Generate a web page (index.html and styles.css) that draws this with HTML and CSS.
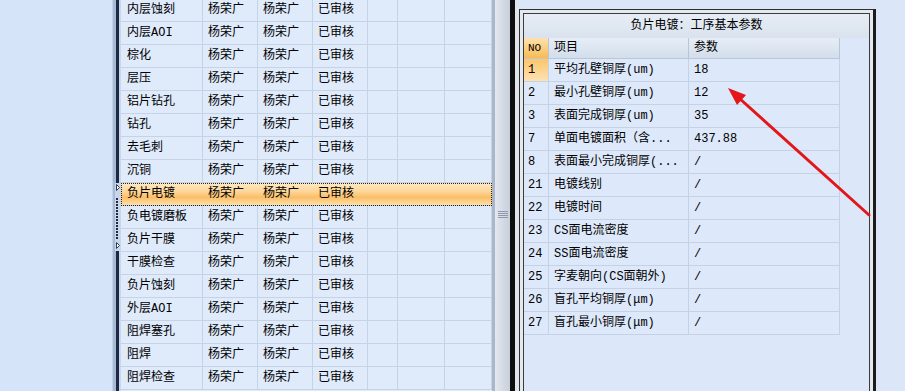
FILE: index.html
```html
<!DOCTYPE html>
<html lang="zh-CN">
<head>
<meta charset="utf-8">
<title>工序基本参数</title>
<link rel="stylesheet" href="styles.css">
</head>
<body>
<div class="app">
  <div class="nav"></div>
  <div class="lsplit">
    <svg class="lgrip" width="6" height="68" viewBox="0 0 6 68">
      <defs>
        <pattern id="dots" width="2" height="3" patternUnits="userSpaceOnUse">
          <rect width="2" height="2" fill="#1f2b44"/>
        </pattern>
      </defs>
      <path d="M1.5 1.5 L4.5 4.5 L1.5 7.5 Z" fill="#ffffff" stroke="#2b3a55" stroke-width="1"/>
      <rect x="1" y="15" width="2" height="42" fill="url(#dots)"/>
      <path d="M1.5 59.5 L4.5 62.5 L1.5 65.5 Z" fill="#ffffff" stroke="#2b3a55" stroke-width="1"/>
    </svg>
  </div>
  <div class="list">
    <div class="rows">
      <div class="row"><span>内层蚀刻</span><span>杨荣广</span><span>杨荣广</span><span>已审核</span><span></span><span></span><span></span></div>
      <div class="row"><span>内层AOI</span><span>杨荣广</span><span>杨荣广</span><span>已审核</span><span></span><span></span><span></span></div>
      <div class="row"><span>棕化</span><span>杨荣广</span><span>杨荣广</span><span>已审核</span><span></span><span></span><span></span></div>
      <div class="row"><span>层压</span><span>杨荣广</span><span>杨荣广</span><span>已审核</span><span></span><span></span><span></span></div>
      <div class="row"><span>铝片钻孔</span><span>杨荣广</span><span>杨荣广</span><span>已审核</span><span></span><span></span><span></span></div>
      <div class="row"><span>钻孔</span><span>杨荣广</span><span>杨荣广</span><span>已审核</span><span></span><span></span><span></span></div>
      <div class="row"><span>去毛刺</span><span>杨荣广</span><span>杨荣广</span><span>已审核</span><span></span><span></span><span></span></div>
      <div class="row"><span>沉铜</span><span>杨荣广</span><span>杨荣广</span><span>已审核</span><span></span><span></span><span></span></div>
      <div class="row sel"><span>负片电镀</span><span>杨荣广</span><span>杨荣广</span><span>已审核</span><span></span><span></span><span></span></div>
      <div class="row"><span>负电镀磨板</span><span>杨荣广</span><span>杨荣广</span><span>已审核</span><span></span><span></span><span></span></div>
      <div class="row"><span>负片干膜</span><span>杨荣广</span><span>杨荣广</span><span>已审核</span><span></span><span></span><span></span></div>
      <div class="row"><span>干膜检查</span><span>杨荣广</span><span>杨荣广</span><span>已审核</span><span></span><span></span><span></span></div>
      <div class="row"><span>负片蚀刻</span><span>杨荣广</span><span>杨荣广</span><span>已审核</span><span></span><span></span><span></span></div>
      <div class="row"><span>外层AOI</span><span>杨荣广</span><span>杨荣广</span><span>已审核</span><span></span><span></span><span></span></div>
      <div class="row"><span>阻焊塞孔</span><span>杨荣广</span><span>杨荣广</span><span>已审核</span><span></span><span></span><span></span></div>
      <div class="row"><span>阻焊</span><span>杨荣广</span><span>杨荣广</span><span>已审核</span><span></span><span></span><span></span></div>
      <div class="row"><span>阻焊检查</span><span>杨荣广</span><span>杨荣广</span><span>已审核</span><span></span><span></span><span></span></div>
    </div>
  </div>
  <div class="rsplit"><div class="hgrip"></div></div>
  <div class="rblack"></div>
  <div class="rpanel">
    <div class="outer">
      <div class="inner">
        <div class="title">负片电镀：工序基本参数</div>
        <div class="params">
          <div class="prow head"><span class="no">NO</span><span>项目</span><span>参数</span></div>
          <div class="prow"><span class="no cur">1</span><span>平均孔壁铜厚(um)</span><span>18</span></div>
          <div class="prow"><span class="no">2</span><span>最小孔壁铜厚(um)</span><span>12</span></div>
          <div class="prow"><span class="no">3</span><span>表面完成铜厚(um)</span><span>35</span></div>
          <div class="prow"><span class="no">7</span><span>单面电镀面积（含...</span><span>437.88</span></div>
          <div class="prow"><span class="no">8</span><span>表面最小完成铜厚(...</span><span>/</span></div>
          <div class="prow"><span class="no">21</span><span>电镀线别</span><span>/</span></div>
          <div class="prow"><span class="no">22</span><span>电镀时间</span><span>/</span></div>
          <div class="prow"><span class="no">23</span><span>CS面电流密度</span><span>/</span></div>
          <div class="prow"><span class="no">24</span><span>SS面电流密度</span><span>/</span></div>
          <div class="prow"><span class="no">25</span><span>字麦朝向(CS面朝外)</span><span>/</span></div>
          <div class="prow"><span class="no">26</span><span>盲孔平均铜厚(μm)</span><span>/</span></div>
          <div class="prow"><span class="no">27</span><span>盲孔最小铜厚(μm)</span><span>/</span></div>
        </div>
      </div>
    </div>
  </div>
  <svg class="arrow" width="905" height="391" viewBox="0 0 905 391">
    <line x1="869" y1="215" x2="739" y2="98" stroke="#e3161b" stroke-width="3" stroke-linecap="round"/>
    <polygon points="728,88 746,95 737,105" fill="#e3161b"/>
  </svg>
</div>
</body>
</html>
```

FILE: styles.css
```css
html, body {
  margin: 0;
  padding: 0;
}

body {
  width: 905px;
  height: 391px;
  overflow: hidden;
  background: #d5e4f9;
}

.app {
  position: relative;
  display: flex;
  width: 905px;
  height: 391px;
  overflow: hidden;
  font-family: "Liberation Mono", "Noto Sans CJK SC", monospace;
  font-size: 12px;
  color: #000;
}

.nav {
  flex: none;
  width: 112px;
  background: #d5e4f9;
}

.lsplit {
  flex: none;
  width: 9px;
  box-sizing: border-box;
  padding-top: 183px;
  background: linear-gradient(to right, #c4d3e8 0, #c4d3e8 1px, #a8bbd5 1px, #a8bbd5 4px, #1e2a45 4px, #1e2a45 7px, #cad7e9 7px, #cad7e9 9px);
}

.lgrip {
  display: block;
  margin-left: 3px;
  background: #c9d6ea;
}

.list {
  flex: none;
  width: 371px;
  background: #dfeafb;
  overflow: hidden;
}

.rows {
  margin-top: -1px;
}

.row {
  display: grid;
  grid-template-columns: 82px 55px 55px 55px 30px 47px 47px;
  height: 23px;
  box-sizing: border-box;
  border-bottom: 1px solid #c6d3e4;
}

.row span {
  box-sizing: border-box;
  border-right: 1px solid #c6d3e4;
  padding-left: 5px;
  line-height: 22px;
  white-space: nowrap;
  overflow: hidden;
}

.row span:first-child {
  padding-left: 6px;
}

.row.sel {
  background: linear-gradient(to bottom, #fee9c4 0%, #fdd597 40%, #fbbe67 65%, #fde0a8 100%);
  outline: 1px dotted #222;
  outline-offset: -1px;
}

.row.sel span {
  border-right-color: transparent;
}

.rsplit {
  flex: none;
  width: 18px;
  box-sizing: border-box;
  padding-top: 211px;
  padding-left: 6px;
  background: linear-gradient(to right, #aab7c9 0, #aab7c9 3px, #e4e8ee 3px, #c6cfdb 18px);
}

.hgrip {
  width: 10px;
  height: 7px;
  background: repeating-linear-gradient(to bottom, #8d99aa 0, #8d99aa 1px, transparent 1px, transparent 2px);
}

.rblack {
  flex: none;
  width: 5px;
  background: #0e0e0e;
}

.rpanel {
  flex: 1;
  display: flex;
  flex-direction: column;
  box-sizing: border-box;
  padding-top: 9px;
  border-left: 4px solid #e1e6ed;
  background: #dbe7f8;
}

.outer {
  flex: 1;
  display: flex;
  flex-direction: column;
  width: 357px;
  box-sizing: border-box;
  border-left: 1px solid #303030;
  border-top: 1px solid #303030;
  border-right: 3px solid #1c1c1c;
  padding: 3px 3px 0 3px;
  background: #e4e9f0;
}

.inner {
  flex: 1;
  border: 1px solid #3c3c3c;
  border-bottom: none;
  background: #dce8f9;
}

.title {
  height: 24px;
  line-height: 24px;
  text-align: center;
  background: linear-gradient(to bottom, #e7edf5, #d9e2ee);
}

.params {
  width: 316px;
}

.prow {
  display: grid;
  grid-template-columns: 25px 140px 151px;
  height: 23px;
  box-sizing: border-box;
  border-bottom: 1px solid #c4d2e4;
  background: #dde9fa;
}

.prow span {
  box-sizing: border-box;
  border-right: 1px solid #c4d2e4;
  padding-left: 5px;
  line-height: 22px;
  white-space: nowrap;
  overflow: hidden;
}

.prow span.no {
  padding-left: 4px;
}

.prow.head {
  height: 21px;
  background: linear-gradient(to bottom, #e6edf6, #d3deeb);
  border-bottom-color: #b9c7d9;
}

.prow.head span {
  line-height: 20px;
  border-right-color: #b7c5d7;
}

.prow.head span.no {
  background: linear-gradient(to bottom, #fde2ae, #f8bb55);
  font-size: 11px;
}

.prow span.cur {
  background: linear-gradient(to bottom, #fbc56a, #fde2b4);
}

.arrow {
  position: absolute;
  left: 0;
  top: 0;
  pointer-events: none;
}
```
